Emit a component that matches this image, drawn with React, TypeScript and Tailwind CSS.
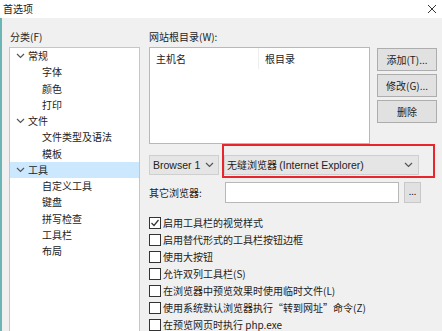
import React from "react";

const font = { fontFamily: '"Noto Sans CJK SC", "Microsoft YaHei", sans-serif' };
const latin = { fontFamily: '"Liberation Sans", Arial, sans-serif' };

function Chevron() {
  return (
    <svg width="9" height="6" viewBox="0 0 9 6" className="shrink-0">
      <path d="M1 1 L4.5 4.5 L8 1" fill="none" stroke="#555" strokeWidth="1.2" />
    </svg>
  );
}

function Row({ label, level, selected }: { label: string; level: 0 | 1; selected?: boolean }) {
  return (
    <div className={`flex items-center h-[16.25px] ${selected ? "bg-[#cce8ff]" : ""}`}>
      {level === 0 ? (
        <>
          <div className="w-[15px] flex justify-end"><Chevron /></div>
          <span className="ml-[3px]">{label}</span>
        </>
      ) : (
        <span className="ml-[32px]">{label}</span>
      )}
    </div>
  );
}

function Check({ label, checked }: { label: string; checked?: boolean }) {
  return (
    <div className="flex items-center h-[17px]">
      <div className="w-[12px] h-[12px] border border-[#333] bg-white flex items-center justify-center">
        {checked && (
          <svg width="10" height="10" viewBox="0 0 10 10">
            <path d="M1.5 5 L4 7.5 L8.5 2" fill="none" stroke="#333" strokeWidth="1.2" />
          </svg>
        )}
      </div>
      <span className="ml-[2px] whitespace-nowrap">{label}</span>
    </div>
  );
}

function Btn({ label }: { label: string }) {
  return (
    <div className="h-[23px] w-[60px] bg-[#e1e1e1] border border-[#adadad] flex items-center justify-center whitespace-nowrap">
      {label}
    </div>
  );
}

export default function App() {
  return (
    <div style={font} className="w-[442px] h-[331px] overflow-hidden bg-[#f0f0f0] text-[10px] text-[#222] leading-none flex flex-col">
      <div className="h-[18px] bg-white flex items-center justify-between pl-[3px] pr-[5px] shrink-0">
        <span>首选项</span>
        <svg width="10" height="10" viewBox="0 0 10 10">
          <path d="M1 1 L9 9 M9 1 L1 9" stroke="#333" strokeWidth="1" />
        </svg>
      </div>
      <div className="flex-1 flex border-l-2 border-[#6bb5b5]">
        <div className="pl-[7px] pt-[12px] w-[140px] flex flex-col shrink-0">
          <div className="h-[14px] flex items-center pl-[1px]">分类(F)</div>
          <div className="mt-[3px] flex-1 bg-white border border-[#c6c6c6] border-b-0 w-[131px]">
            <Row label="常规" level={0} />
            <Row label="字体" level={1} />
            <Row label="颜色" level={1} />
            <Row label="打印" level={1} />
            <Row label="文件" level={0} />
            <Row label="文件类型及语法" level={1} />
            <Row label="模板" level={1} />
            <Row label="工具" level={0} selected />
            <Row label="自定义工具" level={1} />
            <Row label="键盘" level={1} />
            <Row label="拼写检查" level={1} />
            <Row label="工具栏" level={1} />
            <Row label="布局" level={1} />
          </div>
        </div>
        <div className="ml-[7px] pt-[12px] flex flex-col flex-1">
          <div className="h-[14px] flex items-center">网站根目录(W):</div>
          <div className="mt-[3px] flex">
            <div className="w-[221px] h-[97px] bg-white border border-[#b8b8b8]">
              <div className="flex h-[21px] items-center">
                <div className="w-[109px] pl-[6px] h-full flex items-center border-r border-[#eeeeee]">主机名</div>
                <div className="pl-[6px]">根目录</div>
              </div>
            </div>
            <div className="ml-[7px] flex flex-col gap-[3px] pt-[1px]">
              <Btn label="添加(T)..." />
              <Btn label="修改(G)..." />
              <Btn label="删除" />
            </div>
          </div>
          <div className="mt-[11px] flex items-center relative">
            <div className="w-[70px] h-[20px] bg-[#e5e5e5] border border-[#cfcfcf] flex items-center justify-between pl-[3px] pr-[4px] whitespace-nowrap" style={latin}>
              <span className="text-[10.5px]">Browser 1</span>
              <Chevron />
            </div>
            <div className="ml-[5px] w-[195px] h-[20px] bg-[#e5e5e5] border border-[#cfcfcf] flex items-center justify-between pl-[2px] pr-[5px] whitespace-nowrap">
              <span>无缝浏览器 <span style={latin} className="text-[10.5px]">(Internet Explorer)</span></span>
              <Chevron />
            </div>
            <div className="absolute left-[73px] top-[-11px] w-[213px] h-[34px] border-2 border-[#e8262b]" />
          </div>
          <div className="mt-[7px] flex items-center">
            <div className="w-[76px]">其它浏览器:</div>
            <div className="w-[174px] h-[21px] bg-white border border-[#b8b8b8]" />
            <div className="ml-[5px] w-[17px] h-[21px] bg-[#e1e1e1] border border-[#c8c8c8] flex items-center justify-center text-[9px] pb-[3px]">...</div>
          </div>
          <div className="mt-[11px] flex flex-col">
            <Check label="启用工具栏的视觉样式" checked />
            <Check label="启用替代形式的工具栏按钮边框" />
            <Check label="使用大按钮" />
            <Check label="允许双列工具栏(S)" />
            <Check label="在浏览器中预览效果时使用临时文件(L)" />
            <Check label="使用系统默认浏览器执行“转到网址”命令(Z)" />
            <Check label="在预览网页时执行 php.exe" />
          </div>
        </div>
      </div>
    </div>
  );
}
